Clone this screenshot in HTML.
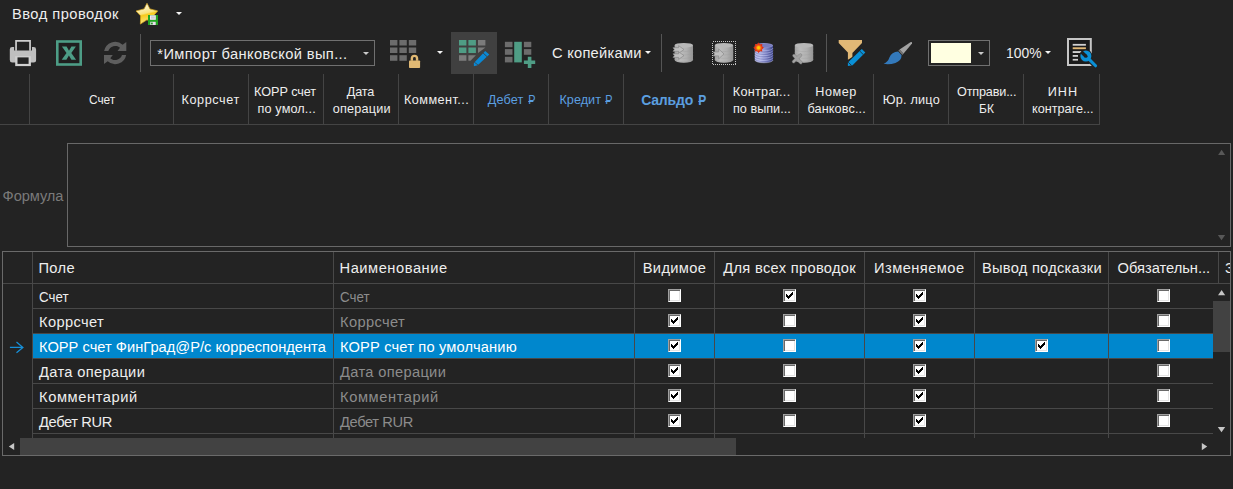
<!DOCTYPE html>
<html>
<head>
<meta charset="utf-8">
<style>
*{box-sizing:border-box;margin:0;padding:0}
html,body{width:1233px;height:489px;overflow:hidden;background:#232323}
body{position:relative;font-family:"Liberation Sans",sans-serif;color:#f4f4f4;font-size:14.67px}
.a,svg{position:absolute}
.t{position:absolute;white-space:nowrap;line-height:1}
.v{position:absolute;width:1px;background:#484848}
.h{position:absolute;height:1px;background:#484848}
.rub{position:relative;display:inline-block;transform:scaleX(.86);transform-origin:100% 50%}
.rub::after{content:"";position:absolute;left:-0.02em;width:0.5em;top:0.545em;height:0.08em;background:currentColor}
.cb{position:absolute;width:13px;height:13px;background:#fff;border:1px solid;border-color:#a0a0a0 #fff #fff #a0a0a0;box-shadow:inset 1px 1px 0 #696969, inset -1px -1px 0 #e3e3e3}
.cb.c::after{content:"";position:absolute;left:2px;top:2px;width:7px;height:7px;background:
 linear-gradient(#000,#000) 0 2px/1px 3px no-repeat,
 linear-gradient(#000,#000) 1px 3px/1px 3px no-repeat,
 linear-gradient(#000,#000) 2px 4px/1px 3px no-repeat,
 linear-gradient(#000,#000) 3px 3px/1px 3px no-repeat,
 linear-gradient(#000,#000) 4px 2px/1px 3px no-repeat,
 linear-gradient(#000,#000) 5px 1px/1px 3px no-repeat,
 linear-gradient(#000,#000) 6px 0px/1px 3px no-repeat}
</style>
</head>
<body>

<div class="a" style="left:451px;top:32px;width:46px;height:42px;background:#404040"></div>
<div class="a" style="left:33px;top:334px;width:1180px;height:24px;background:#0087cd"></div>
<div class="v" style="left:140px;top:34px;height:38px;background:#555"></div>
<div class="v" style="left:661px;top:34px;height:38px;background:#555"></div>
<div class="v" style="left:826px;top:34px;height:38px;background:#555"></div>
<div class="a" style="left:150px;top:40px;width:225px;height:26px;border:1px solid #707070"></div>
<div class="a" style="left:928px;top:40px;width:62px;height:26px;border:1px solid #707070"></div>
<div class="a" style="left:931px;top:43px;width:40px;height:20px;background:#ffffe1"></div>
<svg style="left:176px;top:12px" width="6" height="3" viewBox="0 0 6 3"><path d="M0 0H6L3.0 3Z" fill="#f4f4f4"/></svg>
<svg style="left:363px;top:52px" width="6" height="3" viewBox="0 0 6 3"><path d="M0 0H6L3.0 3Z" fill="#cacaca"/></svg>
<svg style="left:437px;top:51px" width="6" height="3" viewBox="0 0 6 3"><path d="M0 0H6L3.0 3Z" fill="#f4f4f4"/></svg>
<svg style="left:644.6px;top:51px" width="6" height="3" viewBox="0 0 6 3"><path d="M0 0H6L3.0 3Z" fill="#f4f4f4"/></svg>
<svg style="left:978px;top:52px" width="6" height="3" viewBox="0 0 6 3"><path d="M0 0H6L3.0 3Z" fill="#cacaca"/></svg>
<svg style="left:1045px;top:51px" width="6" height="3" viewBox="0 0 6 3"><path d="M0 0H6L3.0 3Z" fill="#f4f4f4"/></svg>
<!-- star + floppy -->
<svg style="left:134px;top:1px" width="26" height="26" viewBox="134 1 26 26">
<defs>
<linearGradient id="sg" x1="0.2" y1="0" x2="0.45" y2="1"><stop offset="0" stop-color="#fffdf0"/><stop offset="0.3" stop-color="#fbeeb0"/><stop offset="0.5" stop-color="#f9e27c"/><stop offset="0.58" stop-color="#f7ca1c"/><stop offset="0.75" stop-color="#f8d548"/><stop offset="1" stop-color="#fbe98e"/></linearGradient>
</defs>
<path d="M147 3.3L149.9 8.9L157.7 10.9L153.6 15.6L154.2 23.9L147 19.8L140.4 24.1L140.6 15.8L136 11L144.1 8.9Z" fill="url(#sg)" stroke="#dba91c" stroke-width="0.7" stroke-linejoin="round"/>
<rect x="148" y="15" width="10" height="10" fill="#22a422"/>
<rect x="150" y="15.3" width="5.8" height="4.5" fill="#f6e6f8"/>
<rect x="151" y="16.3" width="3.8" height="2.4" fill="#cfcfd4"/>
<rect x="150.3" y="21.8" width="5.4" height="3.2" fill="#eadcee"/>
<rect x="151" y="22.6" width="1.8" height="1.8" fill="#2a9a2a"/>
</svg>
<!-- printer -->
<svg style="left:9px;top:39px" width="29" height="28" viewBox="9 39 29 28">
<path d="M9.8 49.5Q9.8 47.1 12.2 47.1H14.1V50.6H32V47.1H33.6Q36.1 47.1 36.1 49.5V60Q36.1 62.5 33.6 62.5H12.2Q9.8 62.5 9.8 60Z" fill="#bfbfbf"/>
<path d="M16.05 50.8V40.85H30.05V50.8" fill="none" stroke="#d0d0d0" stroke-width="1.7"/>
<rect x="15.2" y="56.2" width="15.7" height="9.9" fill="#d0d0d0"/>
<rect x="17.5" y="57.4" width="11.1" height="6.5" fill="#232323"/>
</svg>
<!-- excel -->
<svg style="left:55px;top:39px" width="29" height="28" viewBox="55 39 29 28">
<rect x="57.3" y="41.5" width="23.4" height="23" fill="#1f1f1f" stroke="#4d9d86" stroke-width="2.6"/>
<path d="M61.9 46.6H66.6L69 50.7L71.4 46.6H75.9L71.3 53.1L76.1 59.7H71.4L68.9 55.6L66.4 59.7H61.7L66.5 53.1Z" fill="#4d9d86"/>
</svg>
<!-- refresh -->
<svg style="left:103px;top:41px" width="25" height="24" viewBox="103 41 25 24">
<g fill="#5e5e5e">
<path id="rf" d="M104.13 51A11.2 11.2 0 0 1 122.64 44.68L126.3 42V51H117.5L120 47.8A7.1 7.1 0 0 0 108.34 51Z"/>
<use href="#rf" transform="rotate(180 115.15 53)"/>
</g>
</svg>
<!-- grid lock -->
<svg style="left:389px;top:39px" width="33" height="30" viewBox="389 39 33 30">
<g fill="#6c6c6c">
<rect x="390" y="40" width="7.4" height="5.5"/><rect x="399.4" y="40" width="7.4" height="5.5"/><rect x="408.8" y="40" width="7.4" height="5.5"/>
<rect x="390" y="47.5" width="7.4" height="5.5"/><rect x="399.4" y="47.5" width="7.4" height="5.5"/><rect x="408.8" y="47.5" width="7.4" height="5.5"/>
<rect x="390" y="55.2" width="7.4" height="5.6"/><rect x="399.4" y="55.2" width="7.4" height="5.6"/>
</g>
<rect x="409" y="60.4" width="11.1" height="7.6" rx="0.8" fill="#e0b873"/>
<path d="M411.85 60.8V58.5A2.6 2.6 0 0 1 417.05 58.5V60.8" fill="none" stroke="#e0b873" stroke-width="2.4"/>
</svg>
<!-- grid edit -->
<svg style="left:458px;top:39px" width="33" height="29" viewBox="458 39 33 29">
<g fill="#4f9d85">
<rect x="459" y="40" width="7.4" height="5.5"/><rect x="468.4" y="40" width="7.5" height="5.5"/>
<rect x="459" y="47.5" width="7.4" height="5.5"/><rect x="468.4" y="47.5" width="7.5" height="5.5"/>
</g>
<g fill="#7b7b7b">
<rect x="478" y="40" width="7.4" height="5.5"/>
<path d="M478 47.5H485.4L478 53Z"/>
<rect x="459" y="55.2" width="7.4" height="5.6"/>
<path d="M468.4 55.2H475.9L470.5 60.8H468.4Z"/>
</g>
<path d="M485.2 50.9L489.3 54.6L477.7 65.3L473.9 66.2V62.9Z" fill="#0a88d4" stroke="#404040" stroke-width="1.3" paint-order="stroke" stroke-linejoin="round"/>
<path d="M482.8 52.7L487.3 56.9" stroke="#404040" stroke-width="0.9"/>
<path d="M474.3 62.2L478.3 65.2" stroke="#404040" stroke-width="0.8"/>
</svg>
<!-- grid plus -->
<svg style="left:504px;top:40px" width="33" height="29" viewBox="504 40 33 29">
<g fill="#6c6c6c">
<rect x="504.9" y="41.8" width="7.6" height="5.4"/><rect x="504.9" y="49.1" width="7.6" height="5.7"/><rect x="504.9" y="56.8" width="7.6" height="5.6"/>
<rect x="523.9" y="41.8" width="7.4" height="5.4"/><rect x="523.9" y="49.1" width="7.4" height="5.7"/>
</g>
<rect x="514.2" y="41.8" width="7.6" height="20.6" fill="#4f9d85"/>
<path d="M527.8 56.8H531.4V60.5H535.2V64.1H531.4V67.9H527.8V64.1H523.9V60.5H527.8Z" fill="#4f9d85"/>
</svg>
<!-- db icons -->
<svg style="left:668px;top:38px" width="150" height="30" viewBox="668 38 150 30">
<defs>
<linearGradient id="cg" x1="0" y1="0" x2="1" y2="0"><stop offset="0" stop-color="#a4a4a4"/><stop offset="0.3" stop-color="#bcbcbc"/><stop offset="0.65" stop-color="#b0b0b0"/><stop offset="1" stop-color="#949494"/></linearGradient>
<linearGradient id="cb" x1="0" y1="0" x2="1" y2="0"><stop offset="0" stop-color="#a8acdc"/><stop offset="0.3" stop-color="#b4b8e8"/><stop offset="0.65" stop-color="#7c82c4"/><stop offset="1" stop-color="#3c4488"/></linearGradient>
<radialGradient id="bst"><stop offset="0" stop-color="#ffd400"/><stop offset="0.25" stop-color="#ffbc00"/><stop offset="0.45" stop-color="#f0641a"/><stop offset="0.7" stop-color="#e23012"/><stop offset="1" stop-color="#d42a12"/></radialGradient>
<g id="cyl">
<path d="M0 2.5V17.2A9.2 2.8 0 0 0 18.4 17.2V2.5Z" fill="url(#cg)"/>
<ellipse cx="9.2" cy="2.5" rx="9.2" ry="2.4" fill="#b8b8b8"/>
<path d="M0 6A9.2 2.8 0 0 0 18.4 6M0 9.4A9.2 2.8 0 0 0 18.4 9.4M0 12.8A9.2 2.8 0 0 0 18.4 12.8M0 16.2A9.2 2.8 0 0 0 18.4 16.2" fill="none" stroke="#9a9a9a" stroke-width="0.5" opacity="0.6"/>
</g>
<path id="arw" d="M0 2H5.6V0L11 3.8L5.6 7.6V5.6H0L1.4 3.8Z"/><path id="arw2" d="M0 3H5.6V0L11 5L5.6 10V7H0L1.6 5Z"/>
</defs>
<!-- db1 -->
<use href="#cyl" x="674.6" y="42.8"/>
<use href="#arw" x="673" y="45.7" fill="#c0c0c0" stroke="#8a8a8a" stroke-width="0.7"/>
<use href="#arw" x="673" y="51.8" fill="#c0c0c0" stroke="#8a8a8a" stroke-width="0.7"/>
<!-- db2 -->
<rect x="712.5" y="41.5" width="23" height="23" fill="none" stroke="#c6c6c6" stroke-width="1" stroke-dasharray="1 1" shape-rendering="crispEdges"/>
<use href="#cyl" x="714.8" y="42.8"/>
<use href="#arw2" x="713" y="48.9" fill="#c0c0c0" stroke="#8a8a8a" stroke-width="0.7"/>
<!-- db3 -->
<g transform="translate(754.8 42.8)">
<path d="M0 2.6V17.2A9.1 2.8 0 0 0 18.2 17.2V2.6Z" fill="url(#cb)"/>
<path d="M0 5.2A9.1 2.8 0 0 0 18.2 5.2M0 7.6A9.1 2.8 0 0 0 18.2 7.6M0 10A9.1 2.8 0 0 0 18.2 10M0 12.4A9.1 2.8 0 0 0 18.2 12.4M0 14.8A9.1 2.8 0 0 0 18.2 14.8M0 17.2A9.1 2.8 0 0 0 18.2 17.2" fill="none" stroke="#d4d8fa" stroke-width="0.8" opacity="0.5"/>
<path d="M0 6.4A9.1 2.8 0 0 0 18.2 6.4M0 8.8A9.1 2.8 0 0 0 18.2 8.8M0 11.2A9.1 2.8 0 0 0 18.2 11.2M0 13.6A9.1 2.8 0 0 0 18.2 13.6M0 16A9.1 2.8 0 0 0 18.2 16" fill="none" stroke="#4a5096" stroke-width="0.7" opacity="0.4"/>
<ellipse cx="9.1" cy="2.6" rx="9.1" ry="2.5" fill="#8c90cc"/>
<ellipse cx="9.1" cy="2.8" rx="8" ry="1.8" fill="#787cbc"/>
</g>
<path d="M758.6 42.5L760.1 44.3L762.3 44.1L762.1 46.3L763.9 47.8L762.1 49.3L762.3 51.5L760.1 51.3L758.6 53.1L757.1 51.3L754.9 51.5L755.1 49.3L753.3 47.8L755.1 46.3L754.9 44.1L757.1 44.3Z" fill="url(#bst)"/>
<!-- db4 -->
<use href="#cyl" x="794.8" y="42.8"/>
<path d="M793.6 61.6L800.4 55.2M794 55.6L800.8 62.6" stroke="#707070" stroke-width="3.6" stroke-linecap="round" opacity="0.6"/>
<path d="M793.6 61.6L800.4 55.2M794 55.6L800.8 62.6" stroke="#a2a2a2" stroke-width="2.5" stroke-linecap="round"/>
</svg>
<!-- funnel + pencil -->
<svg style="left:837px;top:39px" width="30" height="29" viewBox="837 39 30 29">
<path d="M838.7 40H862V43L852.4 53V57L847.9 59.8V52.4L838.7 43Z" fill="#e1b876"/>
<path d="M861.8 48.9L865.3 52.6L852.6 65.2L847.9 65.9V62.6Z" fill="#0a90d6" stroke="#232323" stroke-width="1.7" paint-order="stroke" stroke-linejoin="round"/>
<path d="M859.7 51L863.4 54.7" stroke="#232323" stroke-width="0.8"/>
<path d="M848.1 62.2L851.5 65.4" stroke="#232323" stroke-width="0.8"/>
</svg>
<!-- brush -->
<svg style="left:882px;top:40px" width="32" height="26" viewBox="882 40 32 26">
<path d="M899.6 49.6L910.4 42.2Q912.4 41.4 912 43.4L903.4 53.8Z" fill="#a2a2a2"/>
<path d="M898.3 50.6L899.8 49.4L903.6 53.6L902.4 55Z" fill="#747474"/>
<path d="M898.2 51.4L901.6 55.2Q901.6 60.6 895.4 62.9Q889.6 64.8 883.6 63.8Q888 62.2 889.4 57.6Q891.6 51.6 898.2 51.4Z" fill="#3379bb"/>
</svg>
<!-- report + wrench -->
<svg style="left:1066px;top:37px" width="33" height="32" viewBox="1066 37 33 32">
<rect x="1068" y="39" width="22.8" height="26" fill="#1b1b1b" stroke="#c6c6c6" stroke-width="2"/>
<rect x="1072.7" y="43.9" width="13.2" height="1.8" fill="#d0d0d0"/>
<rect x="1072.7" y="47.3" width="13.2" height="1.9" fill="#e1b876"/>
<rect x="1072.7" y="51.1" width="9.2" height="1.9" fill="#d0d0d0"/>
<rect x="1072.7" y="55" width="5.3" height="1.8" fill="#d0d0d0"/>
<rect x="1072.7" y="58.9" width="5.3" height="1.7" fill="#d0d0d0"/>
<circle cx="1085.9" cy="56" r="6.5" fill="#212121"/>
<path d="M1087.5 57.6L1095.6 65.8" stroke="#232323" stroke-width="5.4" stroke-linecap="round"/>
<path d="M1087.5 57.6L1095.6 65.8" stroke="#0a90d6" stroke-width="3" stroke-linecap="round"/>
<circle cx="1085.9" cy="56" r="5.5" fill="#0a90d6"/>
<path d="M1085.9 56.2L1081.2 51.7" stroke="#1f1f1f" stroke-width="3.3"/><circle cx="1085.9" cy="56.2" r="1.65" fill="#1f1f1f"/>
</svg>

<div class="h" style="left:0px;top:124px;width:1100px;background:#444"></div>
<div class="v" style="left:29px;top:74px;height:50px;background:#444"></div>
<div class="v" style="left:173px;top:74px;height:50px;background:#444"></div>
<div class="v" style="left:248px;top:74px;height:50px;background:#444"></div>
<div class="v" style="left:323px;top:74px;height:50px;background:#444"></div>
<div class="v" style="left:398px;top:74px;height:50px;background:#444"></div>
<div class="v" style="left:473px;top:74px;height:50px;background:#444"></div>
<div class="v" style="left:548px;top:74px;height:50px;background:#444"></div>
<div class="v" style="left:623px;top:74px;height:50px;background:#444"></div>
<div class="v" style="left:723px;top:74px;height:50px;background:#444"></div>
<div class="v" style="left:798px;top:74px;height:50px;background:#444"></div>
<div class="v" style="left:873px;top:74px;height:50px;background:#444"></div>
<div class="v" style="left:948px;top:74px;height:50px;background:#444"></div>
<div class="v" style="left:1023px;top:74px;height:50px;background:#444"></div>
<div class="v" style="left:1099px;top:74px;height:50px;background:#444"></div>
<div class="a" style="left:67px;top:143px;width:1164px;height:104px;border:1px solid #686868"></div>
<svg style="left:1217px;top:149px" width="10" height="8" viewBox="1217 149 10 8"><path d="M1218.1 155H1225.1L1221.6 149.7Z" fill="#585858"/></svg>
<svg style="left:1217px;top:234px" width="10" height="8" viewBox="1217 234 10 8"><path d="M1217.9 234.9H1225.1L1221.5 240.2Z" fill="#585858"/></svg>
<div class="a" style="left:2px;top:251px;width:1229px;height:205px;border:1px solid #6a6a6a"></div>
<div class="h" style="left:3px;top:283px;width:1227px"></div>
<div class="h" style="left:32px;top:308px;width:1181px"></div>
<div class="h" style="left:32px;top:333px;width:1181px"></div>
<div class="h" style="left:32px;top:358px;width:1181px"></div>
<div class="h" style="left:32px;top:383px;width:1181px"></div>
<div class="h" style="left:32px;top:408px;width:1181px"></div>
<div class="h" style="left:32px;top:433px;width:1181px"></div>
<div class="v" style="left:32px;top:252px;height:186px"></div>
<div class="v" style="left:333px;top:252px;height:186px"></div>
<div class="v" style="left:634px;top:252px;height:186px"></div>
<div class="v" style="left:714px;top:252px;height:186px"></div>
<div class="v" style="left:864px;top:252px;height:186px"></div>
<div class="v" style="left:974px;top:252px;height:186px"></div>
<div class="v" style="left:1108px;top:252px;height:186px"></div>
<div class="v" style="left:1218px;top:252px;height:31px"></div>
<div class="t" style="left:1225px;top:260.6px;width:5px;overflow:hidden;color:#eee">З</div>
<div class="cb" style="left:668px;top:289px"></div>
<div class="cb c" style="left:783px;top:289px"></div>
<div class="cb c" style="left:913px;top:289px"></div>
<div class="cb" style="left:1157px;top:289px"></div>
<div class="cb c" style="left:668px;top:314px"></div>
<div class="cb" style="left:783px;top:314px"></div>
<div class="cb c" style="left:913px;top:314px"></div>
<div class="cb" style="left:1157px;top:314px"></div>
<div class="cb c" style="left:668px;top:339px"></div>
<div class="cb" style="left:783px;top:339px"></div>
<div class="cb c" style="left:913px;top:339px"></div>
<div class="cb c" style="left:1035px;top:339px"></div>
<div class="cb" style="left:1157px;top:339px"></div>
<div class="cb c" style="left:668px;top:364px"></div>
<div class="cb" style="left:783px;top:364px"></div>
<div class="cb c" style="left:913px;top:364px"></div>
<div class="cb" style="left:1157px;top:364px"></div>
<div class="cb c" style="left:668px;top:389px"></div>
<div class="cb" style="left:783px;top:389px"></div>
<div class="cb c" style="left:913px;top:389px"></div>
<div class="cb" style="left:1157px;top:389px"></div>
<div class="cb c" style="left:668px;top:414px"></div>
<div class="cb" style="left:783px;top:414px"></div>
<div class="cb c" style="left:913px;top:414px"></div>
<div class="cb" style="left:1157px;top:414px"></div>
<svg style="left:8px;top:340px" width="18" height="15" viewBox="8 340 18 15"><path d="M9.9 347.4H22.6M16.5 342.1L22.9 347.4L16.5 352.8" fill="none" stroke="#1790d9" stroke-width="1.25"/></svg>
<div class="a" style="left:1213px;top:284px;width:17px;height:154px;background:#232323"></div>
<div class="a" style="left:1213px;top:301px;width:17px;height:51px;background:#424242"></div>
<svg style="left:1217px;top:289px" width="10" height="8" viewBox="1217 289 10 8"><path d="M1218 295.3H1225.2L1221.6 290Z" fill="#c6c6c6"/></svg>
<svg style="left:1217px;top:426px" width="10" height="8" viewBox="1217 426 10 8"><path d="M1217.8 426.9H1225.2L1221.5 432.3Z" fill="#c6c6c6"/></svg>
<div class="a" style="left:3px;top:438px;width:1227px;height:17px;background:#232323"></div>
<div class="a" style="left:20px;top:438px;width:716px;height:17px;background:#424242"></div>
<svg style="left:8px;top:442px" width="8" height="10" viewBox="8 442 8 10"><path d="M14.2 443V450.1L8.8 446.5Z" fill="#c6c6c6"/></svg>
<svg style="left:1200px;top:442px" width="9" height="10" viewBox="1200 442 9 10"><path d="M1201.8 443L1207.2 446.6L1201.8 450.2Z" fill="#c6c6c6"/></svg>
<div class="t" id="title" style="left:12.00px;top:6.58px;color:#eeeeee;letter-spacing:0.483px">Ввод проводок</div>
<div class="t" id="combo" style="left:157.30px;top:46.58px;color:#eeeeee;letter-spacing:0.392px">*Импорт банковской вып...</div>
<div class="t" id="kop" style="left:552.00px;top:45.58px;color:#eeeeee;letter-spacing:0.26px">С копейками</div>
<div class="t" id="pct" style="left:1006.15px;top:45.58px;color:#eeeeee;letter-spacing:0px;transform:scaleX(0.9459);transform-origin:0 0">100%</div>
<div class="t" id="formula" style="left:2.60px;top:188.58px;color:#7a7a7a;letter-spacing:-0.1px">Формула</div>
<div class="t" id="g_pole" style="left:38.50px;top:260.58px;color:#eeeeee;letter-spacing:0.333px">Поле</div>
<div class="t" id="g_naim" style="left:339.50px;top:260.58px;color:#eeeeee;letter-spacing:0.545px">Наименование</div>
<div class="t" id="g_vid" style="left:642.75px;top:260.58px;color:#eeeeee;letter-spacing:0.333px">Видимое</div>
<div class="t" id="g_dlya" style="left:723.25px;top:260.58px;color:#eeeeee;letter-spacing:0.312px">Для всех проводок</div>
<div class="t" id="g_izm" style="left:874.00px;top:260.58px;color:#eeeeee;letter-spacing:0.444px">Изменяемое</div>
<div class="t" id="g_vyv" style="left:982.00px;top:260.58px;color:#eeeeee;letter-spacing:0.25px">Вывод подсказки</div>
<div class="t" id="g_ob" style="left:1117.50px;top:260.58px;color:#eeeeee;letter-spacing:0.0px">Обязательн...</div>
<div class="t" id="r0a" style="left:39.00px;top:289.58px;color:#eeeeee;letter-spacing:0px;transform:scaleX(0.9091);transform-origin:0 0">Счет</div>
<div class="t" id="r1a" style="left:39.00px;top:314.58px;color:#eeeeee;letter-spacing:0.357px">Коррсчет</div>
<div class="t" id="r2a" style="left:39.00px;top:339.58px;color:#ffffff;letter-spacing:0.014px">КОРР счет ФинГрад@Р/с корреспондента</div>
<div class="t" id="r3a" style="left:39.00px;top:364.58px;color:#eeeeee;letter-spacing:0.333px">Дата операции</div>
<div class="t" id="r4a" style="left:39.00px;top:389.58px;color:#eeeeee;letter-spacing:0.6px">Комментарий</div>
<div class="t" id="r5a" style="left:39.00px;top:414.58px;color:#eeeeee;letter-spacing:-0.375px">Дебет RUR</div>
<div class="t" id="r0b" style="left:340.00px;top:289.58px;color:#8c8c8c;letter-spacing:0px;transform:scaleX(0.9091);transform-origin:0 0">Счет</div>
<div class="t" id="r1b" style="left:340.00px;top:314.58px;color:#8c8c8c;letter-spacing:0.357px">Коррсчет</div>
<div class="t" id="r2b" style="left:340.00px;top:339.58px;color:#ffffff;letter-spacing:0.167px">КОРР счет по умолчанию</div>
<div class="t" id="r3b" style="left:340.00px;top:364.58px;color:#8c8c8c;letter-spacing:0.333px">Дата операции</div>
<div class="t" id="r4b" style="left:340.00px;top:389.58px;color:#8c8c8c;letter-spacing:0.6px">Комментарий</div>
<div class="t" id="r5b" style="left:340.00px;top:414.58px;color:#8c8c8c;letter-spacing:-0.375px">Дебет RUR</div>
<div class="t" id="h_schet" style="left:88.75px;top:94.27px;color:#eeeeee;letter-spacing:0px;font-size:12.67px;transform:scaleX(0.9375);transform-origin:0 0">Счет</div>
<div class="t" id="h_korr" style="left:181.50px;top:94.27px;color:#eeeeee;letter-spacing:0.571px;font-size:12.67px">Коррсчет</div>
<div class="t" id="h_k2a" style="left:254.10px;top:85.57px;color:#eeeeee;letter-spacing:-0.075px;font-size:12.67px">КОРР счет</div>
<div class="t" id="h_k2b" style="left:257.50px;top:102.57px;color:#eeeeee;letter-spacing:0.133px;font-size:12.67px">по умол...</div>
<div class="t" id="h_d1" style="left:346.70px;top:85.57px;color:#eeeeee;letter-spacing:-0.133px;font-size:12.67px">Дата</div>
<div class="t" id="h_d2" style="left:332.70px;top:102.57px;color:#eeeeee;letter-spacing:0.2px;font-size:12.67px">операции</div>
<div class="t" id="h_komm" style="left:404.00px;top:94.27px;color:#eeeeee;letter-spacing:0.444px;font-size:12.67px">Коммент...</div>
<div class="t" id="h_deb" style="left:487.80px;top:94.27px;color:#5b9fe0;letter-spacing:0.133px;font-size:12.67px">Дебет <span class="rub">Р</span></div>
<div class="t" id="h_kred" style="left:559.50px;top:94.27px;color:#5b9fe0;letter-spacing:0.0px;font-size:12.67px">Кредит <span class="rub">Р</span></div>
<div class="t" id="h_sal" style="left:641.20px;top:93.15px;color:#5b9fe0;letter-spacing:-0.2px;font-size:14.0px;font-weight:700">Сальдо <span class="rub">Р</span></div>
<div class="t" id="h_kn1" style="left:732.75px;top:85.57px;color:#eeeeee;letter-spacing:0.278px;font-size:12.67px">Контраг...</div>
<div class="t" id="h_kn2" style="left:733.00px;top:102.57px;color:#eeeeee;letter-spacing:0.0px;font-size:12.67px">по выпи...</div>
<div class="t" id="h_n1" style="left:815.25px;top:85.57px;color:#eeeeee;letter-spacing:0.5px;font-size:12.67px">Номер</div>
<div class="t" id="h_n2" style="left:807.50px;top:102.57px;color:#eeeeee;letter-spacing:0.111px;font-size:12.67px">банковс...</div>
<div class="t" id="h_yur" style="left:882.75px;top:94.27px;color:#eeeeee;letter-spacing:0.214px;font-size:12.67px">Юр. лицо</div>
<div class="t" id="h_o1" style="left:957.00px;top:85.57px;color:#eeeeee;letter-spacing:-0.167px;font-size:12.67px">Отправи...</div>
<div class="t" id="h_o2" style="left:978.55px;top:102.57px;color:#eeeeee;letter-spacing:0px;font-size:12.67px;transform:scaleX(0.95);transform-origin:0 0">БК</div>
<div class="t" id="h_i1" style="left:1047.75px;top:85.57px;color:#eeeeee;letter-spacing:1.0px;font-size:12.67px">ИНН</div>
<div class="t" id="h_i2" style="left:1032.00px;top:102.57px;color:#eeeeee;letter-spacing:0.0px;font-size:12.67px">контраге...</div>
</body>
</html>
